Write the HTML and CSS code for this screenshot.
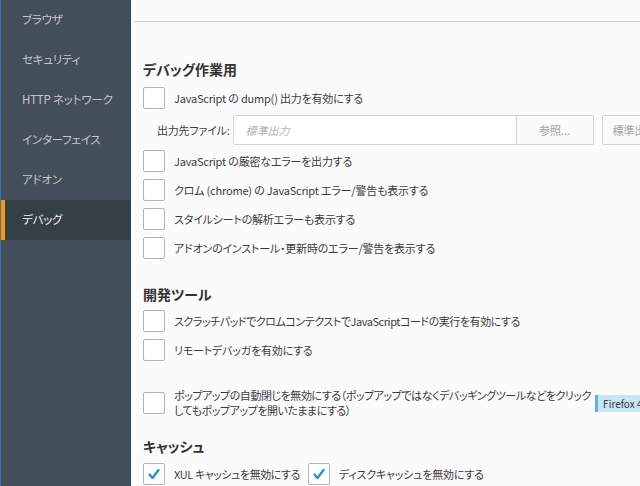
FILE: index.html
```html
<!DOCTYPE html>
<html lang="ja">
<head>
    <meta charset="UTF-8">
    <meta name="viewport" content="width=device-width, initial-scale=1.0">
    <title>オプション - デバッグ</title>
    <link rel="stylesheet" href="styles.css">
</head>
<body>
    <div class="layout">
        <!-- Category list -->
        <nav class="sidebar">
            <div class="nav-item">ブラウザ</div>
            <div class="nav-item">セキュリティ</div>
            <div class="nav-item">HTTP ネットワーク</div>
            <div class="nav-item">インターフェイス</div>
            <div class="nav-item">アドオン</div>
            <div class="nav-item selected">デバッグ</div>
        </nav>

        <main class="content">
            <div class="top-bar"></div>

            <div class="pane">
                <!-- Debug section -->
                <h2 class="section-title debug-title">デバッグ作業用</h2>
                <label class="check-row"><span class="checkbox"></span>JavaScript の dump() 出力を有効にする</label>
                <div class="file-row">
                    <span class="file-label">出力先ファイル:</span>
                    <input class="file-input" type="text" placeholder="標準出力">
                    <button class="btn attached" disabled>参照...</button>
                    <button class="btn" disabled>標準出力に戻す</button>
                </div>
                <label class="check-row"><span class="checkbox"></span>JavaScript の厳密なエラーを出力する</label>
                <label class="check-row"><span class="checkbox"></span>クロム (chrome) の JavaScript エラー/警告も表示する</label>
                <label class="check-row"><span class="checkbox"></span>スタイルシートの解析エラーも表示する</label>
                <label class="check-row"><span class="checkbox"></span>アドオンのインストール・更新時のエラー/警告を表示する</label>

                <!-- Dev tools section -->
                <h2 class="section-title devtools-title">開発ツール</h2>
                <label class="check-row"><span class="checkbox"></span><span class="tight">スクラッチパッドでクロムコンテクストでJavaScriptコードの実行を有効にする</span></label>
                <label class="check-row"><span class="checkbox"></span>リモートデバッガを有効にする</label>

                <div class="check-row popup-row">
                    <span class="checkbox"></span>
                    <span class="multi-line tight">ポップアップの自動閉じを無効にする（ポップアップではなくデバッギングツールなどをクリック<br>してもポップアップを開いたままにする）</span>
                    <span class="version-badge">Firefox 47+</span>
                </div>

                <!-- Cache section -->
                <h2 class="section-title cache-title">キャッシュ</h2>
                <div class="check-row">
                    <span class="checkbox checked"><svg viewBox="0 0 22 22" width="22" height="22"><polyline points="6.5,11.5 9.5,15 15.5,7" fill="none" stroke="#1f8ce6" stroke-width="2.2" stroke-linecap="round" stroke-linejoin="round"/></svg></span>
                    <span class="tight">XUL キャッシュを無効にする</span>
                    <span class="checkbox checked second"><svg viewBox="0 0 22 22" width="22" height="22"><polyline points="6.5,11.5 9.5,15 15.5,7" fill="none" stroke="#1f8ce6" stroke-width="2.2" stroke-linecap="round" stroke-linejoin="round"/></svg></span>
                    <span>ディスクキャッシュを無効にする</span>
                </div>
            </div>
        </main>
    </div>
</body>
</html>
```

FILE: styles.css
```css
html, body {
    margin: 0;
    padding: 0;
    height: 100%;
}
body {
    font-family: "Noto Sans CJK JP", sans-serif;
    font-feature-settings: "palt";
    font-size: 11px;
    letter-spacing: -0.2px;
    color: #3b3b3b;
    background-color: #fbfbfb;
    overflow: hidden;
}
.layout {
    display: flex;
    height: 486px;
}

/* Sidebar */
.sidebar {
    width: 131px;
    flex: none;
    box-sizing: border-box;
    background-color: #424f5a;
    border-left: 1px solid #3b74ad;
    border-right: 1px solid #3a4650;
}
.nav-item {
    height: 40px;
    line-height: 39px;
    padding-left: 21px;
    color: #c3c6c9;
    font-size: 11.5px;
}
.nav-item.selected {
    background-color: #343f48;
    color: #f4f4f4;
    box-shadow: inset 4px 0 #ff9500;
}

/* Main content */
.content {
    flex: 1;
    overflow: hidden;
    min-width: 0;
}
.top-bar {
    height: 21px;
    margin-left: 4px;
    border-bottom: 1px solid #cdcdcf;
}
.pane {
    padding-left: 12px;
}
.section-title {
    font-size: 14px;
    font-weight: bold;
    line-height: 20px;
    letter-spacing: 0;
    color: #333;
    margin: 0 0 7px;
}
.debug-title {
    margin-top: 37px;
    margin-bottom: 8px;
}
.devtools-title {
    margin-top: 25px;
    margin-bottom: 6px;
}
.cache-title {
    margin-top: 18px;
    margin-bottom: 7px;
}

/* Checkbox rows */
.check-row {
    display: flex;
    align-items: center;
    min-height: 22px;
    margin-bottom: 7px;
    white-space: nowrap;
}
.tight {
    letter-spacing: -0.45px;
}
.checkbox {
    width: 22px;
    height: 22px;
    box-sizing: border-box;
    border: 1px solid #b3b3b3;
    border-radius: 2px;
    background-color: #fff;
    margin-right: 9px;
    flex: none;
    position: relative;
}
.checkbox svg {
    position: absolute;
    left: -1px;
    top: -1px;
}
.checkbox.second {
    margin-left: 8px;
}
.popup-row {
    margin-top: 27px;
    margin-bottom: 0;
}
.multi-line {
    line-height: 15px;
}
.version-badge {
    flex: none;
    margin-left: 4px;
    height: 17px;
    line-height: 17px;
    padding: 0 8px 0 5px;
    font-size: 10px;
    letter-spacing: 0;
    background-color: #c7e5f6;
    border-left: 3px solid #5fb3e4;
    color: #333;
}

/* Output file row */
.file-row {
    display: flex;
    align-items: stretch;
    height: 30px;
    margin: -1px 0 5px;
    white-space: nowrap;
}
.file-label {
    padding-left: 14px;
    margin-right: 3px;
    line-height: 30px;
}
.file-input {
    flex: none;
    width: 284px;
    box-sizing: border-box;
    border: 1px solid #d2d2d2;
    border-radius: 2px 0 0 2px;
    background-color: #fff;
    padding: 0 12px;
    font-family: inherit;
    font-size: 11px;
}
.file-input::placeholder {
    color: #b0b0b0;
    font-style: italic;
}
.btn {
    flex: none;
    box-sizing: border-box;
    height: 30px;
    padding: 0 10px;
    border: 1px solid #d4d4d4;
    border-radius: 2px;
    background-color: #fbfbfb;
    color: #a3a3a3;
    font-family: inherit;
    font-size: 11px;
    margin-left: 8px;
}
.btn.attached {
    width: 77px;
    margin-left: 0;
    border-left: none;
    border-radius: 0 2px 2px 0;
}
```
